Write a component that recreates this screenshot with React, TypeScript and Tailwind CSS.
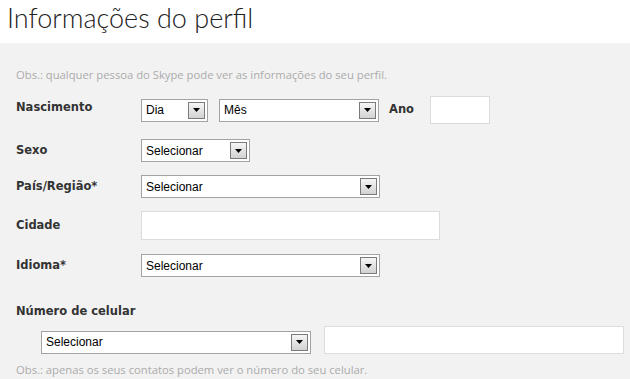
import React from "react";

function Arrow() {
  return (
    <div className="flex h-[17px] w-[17px] items-center justify-center border border-[#7a7a7a] bg-gradient-to-b from-[#f6f6f6] to-[#d2d2d2]">
      <svg width="7" height="4" viewBox="0 0 7 4">
        <polygon points="0,0 7,0 3.5,4" fill="#000" />
      </svg>
    </div>
  );
}

function Select({ label, w }: { label: string; w: string }) {
  return (
    <div
      className={`flex h-[23px] items-center justify-between border border-[#a3a3a3] bg-white pl-[4px] pr-[2px] ${w}`}
    >
      <span className="text-[12px] leading-none text-black" style={{ fontFamily: '"Liberation Sans", Arial, sans-serif' }}>
        {label}
      </span>
      <Arrow />
    </div>
  );
}

function Label({ children }: { children: React.ReactNode }) {
  return (
    <div
      className="w-[125px] shrink-0 text-[11.5px] font-bold leading-none text-[#333]"
      style={{ fontFamily: '"DejaVu Sans", Verdana, sans-serif' }}
    >
      {children}
    </div>
  );
}

export default function App() {
  const seg = { fontFamily: '"Open Sans", "Noto Sans", sans-serif' };
  return (
    <div className="h-[379px] w-[630px] overflow-hidden bg-white">
      <div className="h-[43px] pl-[7px] pt-[1px]">
        <div
          className="text-[27px] font-light leading-[34px] text-[#222]"
          style={{ fontFamily: 'Lato, "Open Sans", sans-serif' }}
        >
          Informações do perfil
        </div>
      </div>
      <div className="flex h-[336px] flex-col bg-[#f2f2f2] pl-[16px]">
        <div className="mt-[25px] text-[11.25px] leading-[14px] text-[#ababab]" style={seg}>
          Obs.: qualquer pessoa do Skype pode ver as informações do seu perfil.
        </div>
        <div className="mt-[14px] flex h-[28px] items-center">
          <div className="-mt-[5px]">
            <Label>Nascimento</Label>
          </div>
          <div className="flex items-center">
            <Select label="Dia" w="w-[67px]" />
            <div className="w-[11px]" />
            <Select label="Mês" w="w-[160px]" />
            <div
              className="ml-[10px] w-[41px] text-[11.5px] font-bold text-[#333]"
              style={{ fontFamily: '"DejaVu Sans", Verdana, sans-serif' }}
            >
              Ano
            </div>
            <div className="h-[28px] w-[60px] border border-[#dcdcdc] bg-white" />
          </div>
        </div>
        <div className="mt-[15px] flex items-center">
          <Label>Sexo</Label>
          <Select label="Selecionar" w="w-[109px]" />
        </div>
        <div className="mt-[13px] flex items-center">
          <Label>País/Região*</Label>
          <Select label="Selecionar" w="w-[239px]" />
        </div>
        <div className="mt-[13px] flex items-center">
          <Label>Cidade</Label>
          <div className="h-[29px] w-[299px] border border-[#dcdcdc] bg-white" />
        </div>
        <div className="mt-[14px] flex items-center">
          <Label>Idioma*</Label>
          <Select label="Selecionar" w="w-[239px]" />
        </div>
        <div className="mt-[29px]">
          <Label>
            <span className="whitespace-nowrap">Número de celular</span>
          </Label>
        </div>
        <div className="mt-[8px] flex items-end pl-[25px]">
          <Select label="Selecionar" w="w-[270px]" />
          <div className="ml-[13px] h-[28px] w-[300px] border border-[#dcdcdc] bg-white" />
        </div>
        <div className="mt-[9px] text-[11.25px] leading-[14px] text-[#ababab]" style={seg}>
          Obs.: apenas os seus contatos podem ver o número do seu celular.
        </div>
      </div>
    </div>
  );
}
